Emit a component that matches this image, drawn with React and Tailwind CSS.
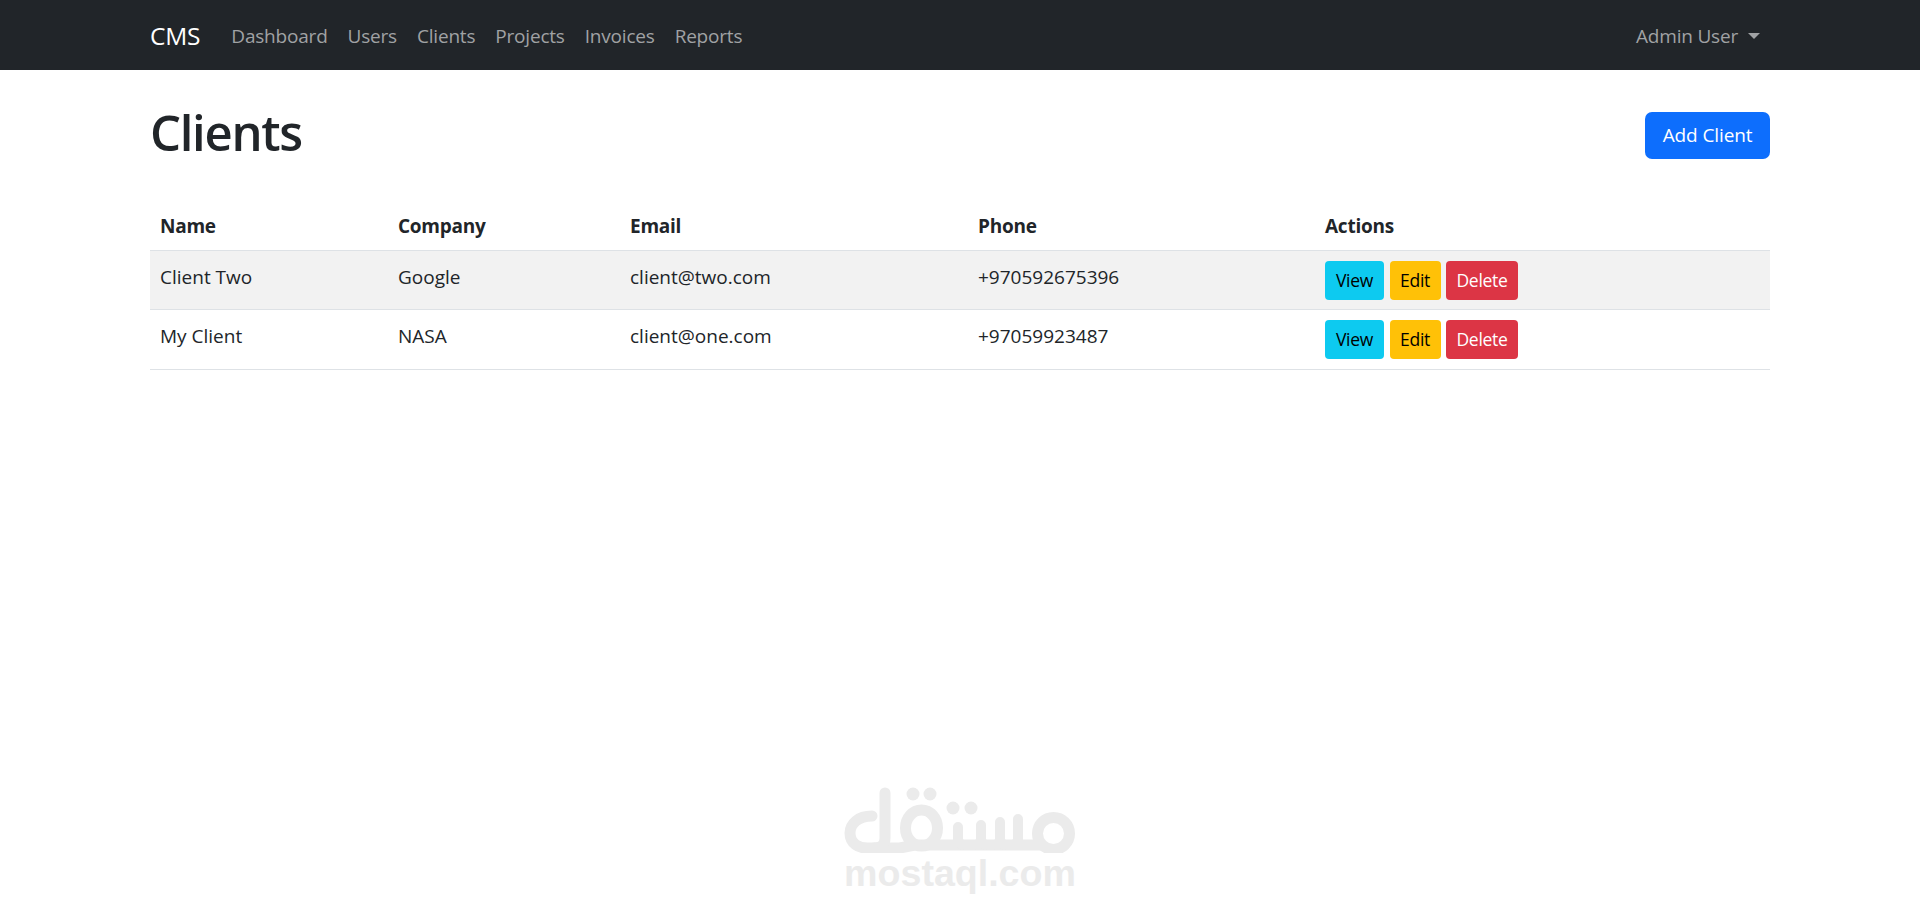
function Btn({ bg, color, width, children }) {
  return <span className={`inline-flex h-[39px] items-center justify-center rounded-[4px] text-[17.5px] tracking-[-0.3px] ${width} ${bg} ${color}`}>{children}</span>;
}

const rows = [
  ["Client Two", "Google", "client@two.com", "+970592675396", "h-[59px] bg-[#f2f2f2]", "pb-[4px]", "pt-[2px]"],
  ["My Client", "NASA", "client@one.com", "+97059923487", "h-[60px] bg-white", "pb-[6px]", "pt-0"],
];

export default function App() {
  return (
    <div className="relative h-[912px] overflow-hidden bg-white text-[#212529] font-['Open_Sans',sans-serif]">
      <nav className="h-[70px] bg-[#212529] px-[150px] pt-[2px] flex items-center justify-between text-[19px] tracking-[-0.2px]">
        <div className="flex items-center">
          <span className="text-white text-[24.5px] mr-[31px]">CMS</span>
          <div className="flex gap-[20px] text-[#a0a2a4]">
            <span>Dashboard</span><span>Users</span><span>Clients</span><span>Projects</span><span>Invoices</span><span>Reports</span>
          </div>
        </div>
        <div className="flex items-center gap-[10px] pr-[10px] text-[#a0a2a4]">
          <span>Admin User</span>
          <span className="w-0 h-0 border-x-[6px] border-x-transparent border-t-[6px] border-t-[#a0a2a4]"></span>
        </div>
      </nav>
      <main className="px-[150px]">
        <div className="flex items-start justify-between pt-[33px] pb-[40px]">
          <h1 className="text-[49px] leading-[58px] font-semibold tracking-[-1.3px]">Clients</h1>
          <span className="mt-[9px] inline-flex h-[47px] items-center rounded-[7px] bg-[#0d6efd] px-[17.5px] text-[19px] text-white tracking-[-0.1px]">Add Client</span>
        </div>
        <table className="w-full table-fixed text-[19px]">
          <thead>
            <tr className="h-[49px] border-b border-[#dee2e6] text-left font-bold tracking-[-0.25px]">
              <th className="w-[238px] pl-[10px] pt-[2px]">Name</th>
              <th className="w-[232px] pl-[10px] pt-[2px]">Company</th>
              <th className="w-[348px] pl-[10px] pt-[2px]">Email</th>
              <th className="w-[347px] pl-[10px] pt-[2px]">Phone</th>
              <th className="pl-[10px] pt-[2px]">Actions</th>
            </tr>
          </thead>
          <tbody>
            {rows.map((r) => (
              <tr key={r[0]} className={`border-b border-[#dee2e6] ${r[4]}`}>
                <td className={`pl-[10px] ${r[5]}`}>{r[0]}</td>
                <td className={`pl-[10px] ${r[5]}`}>{r[1]}</td>
                <td className={`pl-[10px] ${r[5]}`}>{r[2]}</td>
                <td className={`pl-[10px] ${r[5]}`}>{r[3]}</td>
                <td className={`pl-[10px] ${r[6]}`}>
                  <div className="flex gap-[5.5px]">
                    <Btn width="w-[59px]" bg="bg-[#0dcaf0]" color="text-black">View</Btn>
                    <Btn width="w-[51px]" bg="bg-[#ffc107]" color="text-black">Edit</Btn>
                    <Btn width="w-[72px]" bg="bg-[#dc3545]" color="text-white">Delete</Btn>
                  </div>
                </td>
              </tr>
            ))}
          </tbody>
        </table>
      </main>
      <div className="absolute left-[820px] top-[760px] w-[280px] flex flex-col items-center">
        <svg className="block" width="280" height="93" viewBox="820 760 280 93" fill="none" stroke="#ebebeb" strokeWidth="11" strokeLinecap="round">
          <path d="M872 816C858 816 850 824 850 833C850 843 858 849 870 848H900L915 845H1040" />
          <path d="M885 793V838Q885 848 874 848" />
          <ellipse cx="921.5" cy="828" rx="16" ry="18" />
          <path d="M958 827V845M981 825V845M1000 822V845M1018 819V845" strokeWidth="10" />
          <path d="M958 838Q958 845 966 845M981 838Q981 845 973 845M981 838Q981 845 989 845M1000 838Q1000 845 992 845M1000 838Q1000 845 1008 845M1018 838Q1018 845 1010 845" strokeWidth="10" />
          <circle cx="1053.5" cy="833.5" r="16" />
          <g fill="#ebebeb" stroke="none">
            <circle cx="913" cy="794" r="6.5" />
            <circle cx="930" cy="794" r="6.5" />
            <circle cx="953" cy="808" r="6.5" />
            <circle cx="971" cy="808" r="6.5" />
          </g>
        </svg>
        <span className="text-[37.6px] leading-[40px] font-bold text-[#ebebeb] font-['Liberation_Sans',sans-serif]">mostaql.com</span>
      </div>
    </div>
  );
}
